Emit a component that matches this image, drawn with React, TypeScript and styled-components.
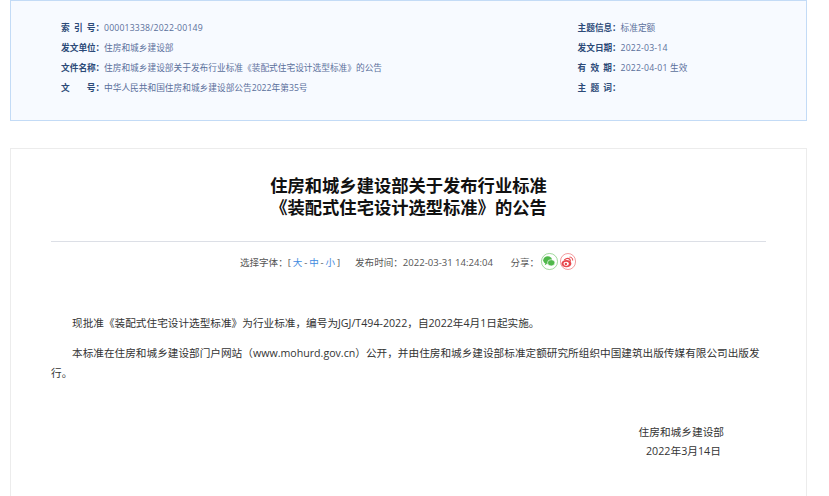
import styled, { createGlobalStyle } from "styled-components";

const GlobalStyle = createGlobalStyle`
  html, body {
    margin: 0;
    padding: 0;
    background: #fff;
  }

  body {
    font-family: "Open Sans", "Noto Sans CJK SC", sans-serif;
    overflow: hidden;
  }
`;

type Row = { label: string; value: string; numeric?: boolean };

const leftRows: Row[] = [
  { label: "索 引 号", value: "000013338/2022-00149", numeric: true },
  { label: "发文单位", value: "住房和城乡建设部" },
  { label: "文件名称", value: "住房和城乡建设部关于发布行业标准《装配式住宅设计选型标准》的公告" },
  { label: "文 号", value: "中华人民共和国住房和城乡建设部公告2022年第35号" },
];

const rightRows: Row[] = [
  { label: "主题信息", value: "标准定额" },
  { label: "发文日期", value: "2022-03-14", numeric: true },
  { label: "有 效 期", value: "2022-04-01 生效", numeric: true },
  { label: "主 题 词", value: "" },
];

function InfoColumn({ rows }: { rows: Row[] }) {
  return (
    <div>
      {rows.map((row) => (
        <InfoRow key={row.label}>
          <InfoLabel>
            {row.label.split(" ").map((part) => (
              <span key={part}>{part}</span>
            ))}
          </InfoLabel>
          <InfoColon>：</InfoColon>
          <InfoValue $numeric={row.numeric}>{row.value}</InfoValue>
        </InfoRow>
      ))}
    </div>
  );
}

export default function App() {
  return (
    <Page>
      <GlobalStyle />
      <InfoBox>
        <InfoColumn rows={leftRows} />
        <InfoColumn rows={rightRows} />
      </InfoBox>

      <Article>
        <Title>
          住房和城乡建设部关于发布行业标准
          <br />
          《装配式住宅设计选型标准》的公告
        </Title>
        <MetaBar>
          <FontSwitch>
            选择字体：[ <FontLink>大</FontLink> - <FontLink>中</FontLink> - <FontLink>小</FontLink> ]
          </FontSwitch>
          <span>发布时间：2022-03-31 14:24:04</span>
          <ShareGroup>
            <span>分享：</span>
            <ShareIcon $color="#4fb84a">
              <svg width="12" height="11" viewBox="0 0 11 10">
                <ellipse cx="4.3" cy="3.8" rx="4.1" ry="3.5" fill="#4fb84a" />
                <ellipse cx="7.5" cy="6.2" rx="3.4" ry="2.9" fill="#4fb84a" stroke="#fff" strokeWidth="0.6" />
                <path d="M2 6.5L1.6 8.4 3.8 7z" fill="#4fb84a" />
              </svg>
            </ShareIcon>
            <ShareIcon $color="#e8474c">
              <svg width="13" height="12" viewBox="0 0 12 11">
                <ellipse cx="5" cy="7" rx="4.6" ry="3.3" fill="#e8474c" />
                <ellipse cx="4.8" cy="7.2" rx="2.5" ry="1.9" fill="#fff" />
                <circle cx="4.5" cy="7.4" r="1.1" fill="#e8474c" />
                <path d="M3 3.6C5 2 7 1.9 8 3s.3 2.3.3 2.3" fill="none" stroke="#e8474c" strokeWidth="1.2" />
                <path d="M7.8 1C9.6.8 11 2 10.8 4.2" fill="none" stroke="#e8474c" strokeWidth="0.9" />
              </svg>
            </ShareIcon>
          </ShareGroup>
        </MetaBar>

        <Body>
          <Paragraph>现批准《装配式住宅设计选型标准》为行业标准，编号为JGJ/T494-2022，自2022年4月1日起实施。</Paragraph>
          <Paragraph>
            本标准在住房和城乡建设部门户网站（www.mohurd.gov.cn）公开，并由住房和城乡建设部标准定额研究所组织中国建筑出版传媒有限公司出版发行。
          </Paragraph>
        </Body>

        <Signature>
          <SignatureLine>住房和城乡建设部</SignatureLine>
          <DateLine>2022年3月14日</DateLine>
        </Signature>
      </Article>
    </Page>
  );
}

const Page = styled.div`
  width: 829px;
  height: 496px;
  padding: 0 22px 0 10px;
  box-sizing: border-box;
  overflow: hidden;
`;

const InfoBox = styled.section`
  height: 121px;
  box-sizing: border-box;
  padding: 17px 0 0 50px;
  display: grid;
  grid-template-columns: 516.5px 1fr;
  background: #f7faff;
  border: 1px solid #c3dbf6;
`;

const InfoRow = styled.div`
  height: 20px;
  display: flex;
  align-items: center;
  font-size: 8.7px;
  line-height: 20px;
  white-space: nowrap;
`;

const InfoLabel = styled.span`
  width: 34.5px;
  display: flex;
  justify-content: space-between;
  color: #2c4a78;
  font-weight: 700;
`;

const InfoColon = styled.span`
  width: 8.5px;
  color: #2c4a78;
  font-weight: 700;
`;

const InfoValue = styled.span<{ $numeric?: boolean }>`
  color: #5a6f9b;
  letter-spacing: ${({ $numeric }) => ($numeric ? "0.17px" : "0")};
`;

const Article = styled.article`
  margin-top: 27px;
  height: 360px;
  padding: 0 40px;
  background: #fff;
  border: 1px solid #ececec;
`;

const Title = styled.h1`
  margin: 26px 0 0;
  padding-bottom: 22px;
  border-bottom: 1px solid #dcdfe6;
  color: #111;
  font-size: 17.3px;
  font-weight: 700;
  line-height: 22px;
  text-align: center;
`;

const MetaBar = styled.div`
  height: 39px;
  padding-right: 1px;
  display: flex;
  justify-content: center;
  align-items: center;
  gap: 15px;
  color: #555;
  font-size: 9.55px;
  white-space: nowrap;
`;

const FontSwitch = styled.span`
  word-spacing: -0.6px;
`;

const FontLink = styled.a`
  color: #3f8ae0;
`;

const ShareGroup = styled.span`
  margin-left: 2.5px;
  display: flex;
  align-items: center;
  gap: 2px;
`;

const ShareIcon = styled.span<{ $color: string }>`
  width: 16.5px;
  height: 16.5px;
  display: flex;
  justify-content: center;
  align-items: center;
  border: 1px solid ${({ $color }) => $color}88;
  border-radius: 50%;
  box-sizing: border-box;
`;

const Body = styled.div`
  margin-top: 32px;
`;

const Paragraph = styled.p`
  margin: 0 0 10px;
  color: #333;
  font-size: 10.65px;
  line-height: 20px;
  text-indent: 21px;
`;

const Signature = styled.div`
  margin-top: 40px;
  color: #333;
  font-size: 10.7px;
  line-height: 19px;
`;

const SignatureLine = styled.div`
  padding-left: 587.5px;
`;

const DateLine = styled.div`
  padding-left: 595px;
`;
